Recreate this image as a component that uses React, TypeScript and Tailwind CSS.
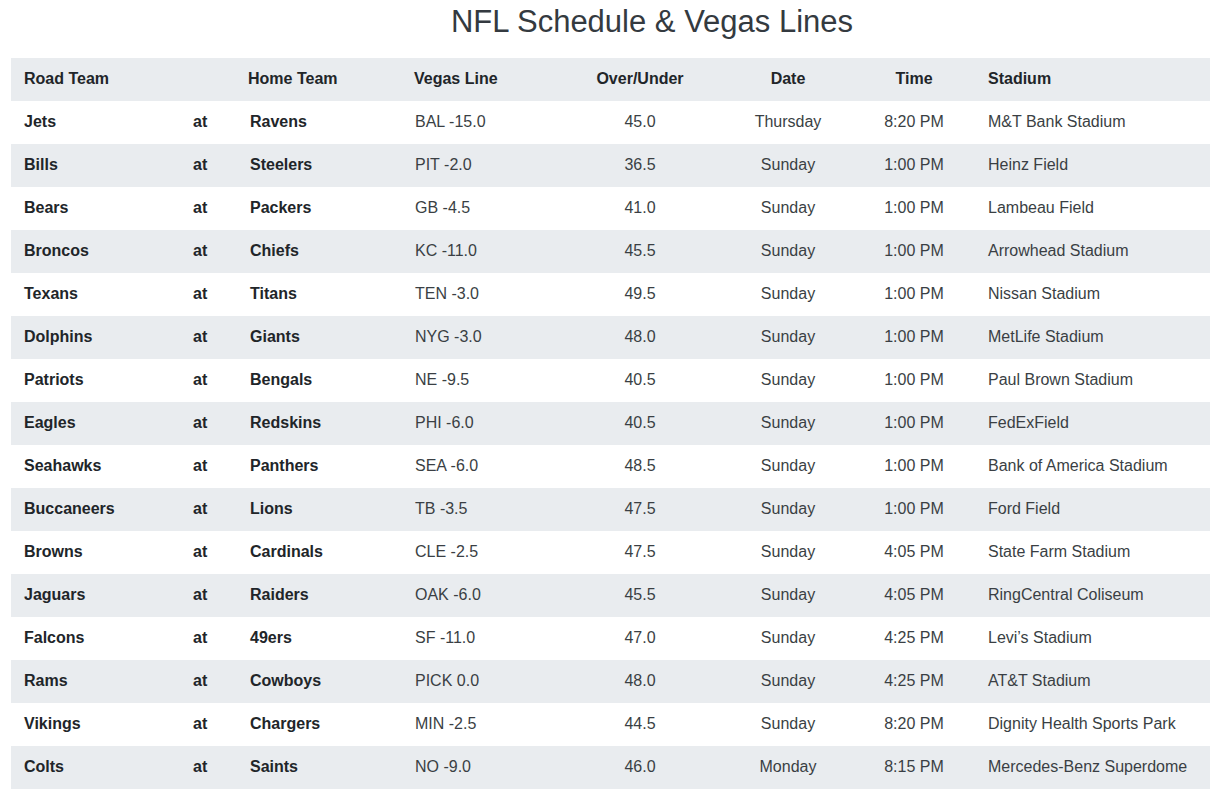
const games = [
  ["Jets", "Ravens", "BAL -15.0", "45.0", "Thursday", "8:20 PM", "M&T Bank Stadium"],
  ["Bills", "Steelers", "PIT -2.0", "36.5", "Sunday", "1:00 PM", "Heinz Field"],
  ["Bears", "Packers", "GB -4.5", "41.0", "Sunday", "1:00 PM", "Lambeau Field"],
  ["Broncos", "Chiefs", "KC -11.0", "45.5", "Sunday", "1:00 PM", "Arrowhead Stadium"],
  ["Texans", "Titans", "TEN -3.0", "49.5", "Sunday", "1:00 PM", "Nissan Stadium"],
  ["Dolphins", "Giants", "NYG -3.0", "48.0", "Sunday", "1:00 PM", "MetLife Stadium"],
  ["Patriots", "Bengals", "NE -9.5", "40.5", "Sunday", "1:00 PM", "Paul Brown Stadium"],
  ["Eagles", "Redskins", "PHI -6.0", "40.5", "Sunday", "1:00 PM", "FedExField"],
  ["Seahawks", "Panthers", "SEA -6.0", "48.5", "Sunday", "1:00 PM", "Bank of America Stadium"],
  ["Buccaneers", "Lions", "TB -3.5", "47.5", "Sunday", "1:00 PM", "Ford Field"],
  ["Browns", "Cardinals", "CLE -2.5", "47.5", "Sunday", "4:05 PM", "State Farm Stadium"],
  ["Jaguars", "Raiders", "OAK -6.0", "45.5", "Sunday", "4:05 PM", "RingCentral Coliseum"],
  ["Falcons", "49ers", "SF -11.0", "47.0", "Sunday", "4:25 PM", "Levi’s Stadium"],
  ["Rams", "Cowboys", "PICK 0.0", "48.0", "Sunday", "4:25 PM", "AT&T Stadium"],
  ["Vikings", "Chargers", "MIN -2.5", "44.5", "Sunday", "8:20 PM", "Dignity Health Sports Park"],
  ["Colts", "Saints", "NO -9.0", "46.0", "Monday", "8:15 PM", "Mercedes-Benz Superdome"],
];

export default function App() {
  return (
    <div
      className="w-[1210px] h-[801px] overflow-hidden bg-white text-[#212529]"
      style={{ fontFamily: '"Liberation Sans", Arial, sans-serif' }}
    >
      <div className="ml-[11px] w-[1282px]">
        <h1 className="mt-[3px] mb-[18px] text-center text-[31px] leading-[37px] text-[#343a40] font-normal">
          NFL Schedule &amp; Vegas Lines
        </h1>
        <table className="w-full border-collapse table-fixed text-[16px]">
          <colgroup>
            <col className="w-[170px]" />
            <col className="w-[55px]" />
            <col className="w-[166px]" />
            <col className="w-[154px]" />
            <col className="w-[168px]" />
            <col className="w-[128px]" />
            <col className="w-[124px]" />
            <col />
          </colgroup>
          <thead>
            <tr className="h-[43px] bg-[#e9ecef] font-bold">
              <th className="px-[13px] pb-[2px] text-left">Road Team</th>
              <th className="px-3 pb-[2px]"></th>
              <th className="px-3 pb-[2px] text-left">Home Team</th>
              <th className="px-3 pb-[2px] text-left">Vegas Line</th>
              <th className="px-3 pb-[2px] text-center">Over/Under</th>
              <th className="px-3 pb-[2px] text-center">Date</th>
              <th className="px-3 pb-[2px] text-center">Time</th>
              <th className="px-3 pb-[2px] text-left">Stadium</th>
            </tr>
          </thead>
          <tbody>
            {games.map((g, i) => (
              <tr key={i} className={`h-[43px] ${i % 2 === 1 ? "bg-[#e9ecef]" : "bg-white"}`}>
                <td className="px-[13px] pb-[2px] font-bold">{g[0]}</td>
                <td className="px-3 pb-[2px] font-bold">at</td>
                <td className="px-[14px] pb-[2px] font-bold">{g[1]}</td>
                <td className="px-[13px] pb-[2px] text-[#3a3f44]">{g[2]}</td>
                <td className="px-3 pb-[2px] text-center text-[#3a3f44]">{g[3]}</td>
                <td className="px-3 pb-[2px] text-center text-[#3a3f44]">{g[4]}</td>
                <td className="px-3 pb-[2px] text-center text-[#3a3f44]">{g[5]}</td>
                <td className="px-3 pb-[2px] text-[#3a3f44]">{g[6]}</td>
              </tr>
            ))}
          </tbody>
        </table>
      </div>
    </div>
  );
}
